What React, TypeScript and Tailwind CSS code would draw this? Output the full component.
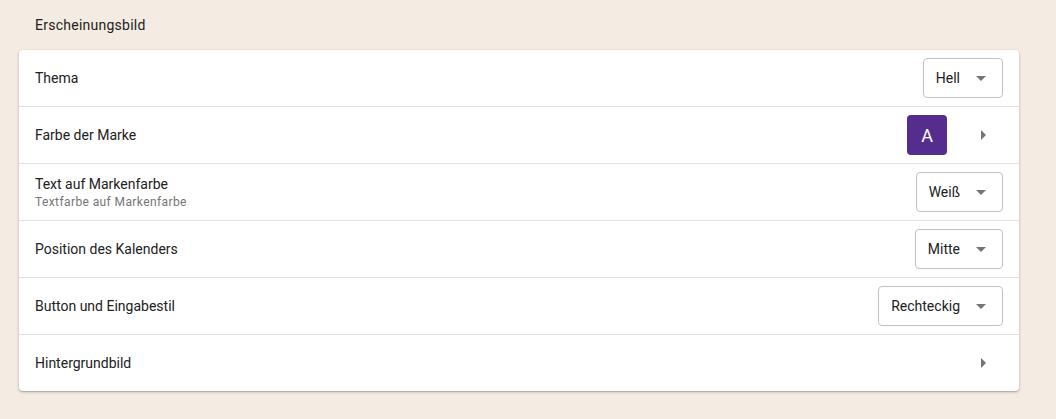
import React from "react";

const Caret = () => (
  <svg width="10" height="5" viewBox="0 0 10 5" className="shrink-0">
    <path d="M0 0 L10 0 L5 5 Z" fill="#757575" />
  </svg>
);

const Chevron = () => (
  <div className="w-10 h-10 flex items-center justify-center">
    <svg width="5" height="10" viewBox="0 0 5 10">
      <path d="M0 0 L5 5 L0 10 Z" fill="#757575" />
    </svg>
  </div>
);

const Select = ({ value }: { value: string }) => (
  <div className="h-10 flex items-center gap-4 pl-3 pr-4 border border-[#c2c2c2] rounded-[4px] text-[14px] text-[#212121]">
    <span>{value}</span>
    <Caret />
  </div>
);

const Row = ({
  title,
  subtitle,
  right,
  last,
}: {
  title: string;
  subtitle?: string;
  right: React.ReactNode;
  last?: boolean;
}) => (
  <div
    className={`h-14 flex items-center justify-between pl-4 pr-4 ${
      last ? "" : "border-b border-[#e0e0e0] box-content"
    }`}
  >
    <div className="flex flex-col">
      <span className="text-[14px] text-[#212121] leading-5">{title}</span>
      {subtitle && (
        <span className="text-[12px] text-[#757575] leading-4 tracking-[0.4px]">{subtitle}</span>
      )}
    </div>
    {right}
  </div>
);

export default function App() {
  return (
    <div
      className="w-[1056px] h-[419px] bg-[#f4ece3] pl-[19px]"
      style={{ fontFamily: "Roboto, 'Liberation Sans', sans-serif" }}
    >
      <div className="h-[50px] flex items-center pl-4 text-[14px] text-[#212121] tracking-[0.25px]">
        Erscheinungsbild
      </div>
      <div className="w-[1000px] bg-white rounded-[4px] shadow-[0_1px_3px_rgba(0,0,0,0.25),0_1px_1px_rgba(0,0,0,0.12)]">
        <Row title="Thema" right={<Select value="Hell" />} />
        <Row
          title="Farbe der Marke"
          right={
            <div className="flex items-center gap-4">
              <div className="w-10 h-10 rounded-[4px] bg-[#552d8f] flex items-center justify-center text-white text-[18px]">
                A
              </div>
              <Chevron />
            </div>
          }
        />
        <Row
          title="Text auf Markenfarbe"
          subtitle="Textfarbe auf Markenfarbe"
          right={<Select value="Weiß" />}
        />
        <Row title="Position des Kalenders" right={<Select value="Mitte" />} />
        <Row title="Button und Eingabestil" right={<Select value="Rechteckig" />} />
        <Row title="Hintergrundbild" right={<Chevron />} last />
      </div>
    </div>
  );
}
